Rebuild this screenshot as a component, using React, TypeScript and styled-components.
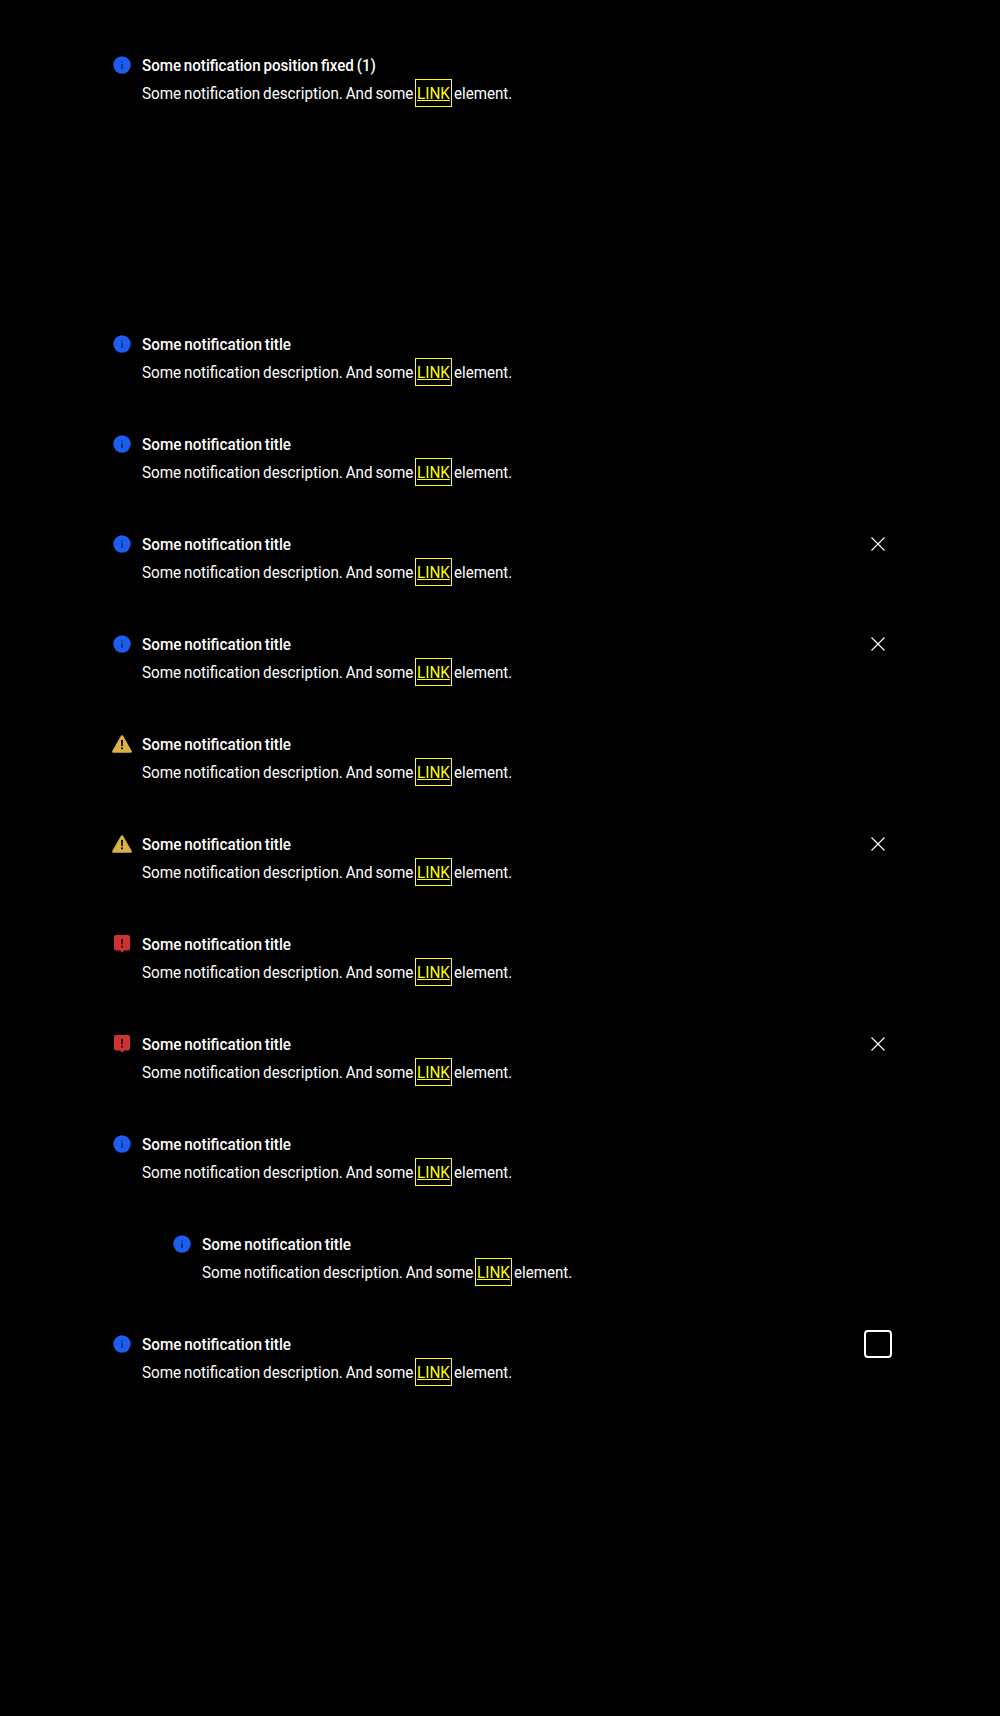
import React from "react";
import styled, { createGlobalStyle } from "styled-components";

type State = "info" | "warning" | "error";

const GlobalStyle = createGlobalStyle`
  html, body { margin: 0; background: #000; }
  * { box-sizing: border-box; }
`;

const Page = styled.main`
  height: 1716px;
  padding: 53px 108px 0 112px;
  background: #000;
  color: #fff;
  font: 400 16px/24px Roboto, "Liberation Sans", sans-serif;
`;

const Stack = styled.section`
  display: flex;
  flex-direction: column;
  gap: 48px;
  margin-top: 227px;
`;

const Row = styled.article<{ $indent?: boolean }>`
  display: flex;
  align-items: flex-start;
  height: 52px;
  margin-left: ${(p) => (p.$indent ? "60px" : "0")};
`;

const Icon = styled.svg`
  flex: none;
  width: 20px;
  height: 24px;
  margin-right: 10px;
`;

const Content = styled.div`
  flex: 1;
  display: flex;
  flex-direction: column;
  gap: 4px;
`;

const Line = styled.div`
  display: flex;
  height: 24px;
  white-space: nowrap;
`;

const Text = styled.span<{ $scale: number; $width?: number; $bold?: boolean }>`
  display: block;
  height: 26px;
  padding-top: 1px;
  width: ${(p) => (p.$width ? `${p.$width}px` : "auto")};
  font-weight: ${(p) => (p.$bold ? 500 : 400)};
  word-spacing: -1px;
  transform: scaleX(${(p) => p.$scale});
  transform-origin: left center;
`;

const Link = styled.a`
  display: block;
  width: 37px;
  height: 28px;
  margin: -2px 2px 0 0;
  padding: 1px 0 0 1px;
  border: 1px solid #ff0;
  color: #ff0;
  text-decoration: none;

  > span {
    text-decoration: underline;
    text-underline-offset: 1px;
    text-decoration-thickness: 1px;
    text-decoration-skip-ink: none;
  }
`;

const Close = styled.button<{ $focus?: boolean }>`
  display: grid;
  place-items: center;
  width: 28px;
  height: 28px;
  margin: -2px 0 0;
  padding: 0;
  border: 2px solid ${(p) => (p.$focus ? "#fff" : "transparent")};
  border-radius: 4px;
  background: transparent;
  color: ${(p) => (p.$focus ? "#020207" : "#fff")};
`;

function StateIcon({ state }: { state: State }) {
  return (
    <Icon viewBox="0 0 20 24">
      {state === "info" && (
        <>
          <circle cx="10" cy="12" r="8.7" fill="#1c5cf0" />
          <path d="M9.3 11h1.4v5H9.3zM9.3 8.4h1.4v1.4H9.3z" fill="#0a2560" />
        </>
      )}
      {state === "warning" && (
        <>
          <path d="M10 4.4 18.7 19.5H1.3z" fill="#dab144" stroke="#dab144" strokeWidth="2.4" strokeLinejoin="round" />
          <path d="M9 8h2l-.3 6.2H9.3zM9.1 15.5h1.8v1.8H9.1z" fill="#000" />
        </>
      )}
      {state === "error" && (
        <>
          <path
            d="M4 3h12a2 2 0 0 1 2 2v11.500a2 2 0 0 1-2 2h-4L10 20.800l-2-2.300H4a2 2 0 0 1-2-2V5a2 2 0 0 1 2-2z"
            fill="#cc3434"
          />
          <path d="M9 7h2l-.3 5.5H9.3zM9.1 13.7h1.8v1.8H9.1z" fill="#2a0808" />
        </>
      )}
    </Icon>
  );
}

interface NoticeProps {
  state?: State;
  title?: string;
  titleScale?: number;
  close?: boolean;
  focus?: boolean;
  indent?: boolean;
}

function Notice({
  state = "info",
  title = "Some notification title",
  titleScale = 0.957,
  close,
  focus,
  indent,
}: NoticeProps) {
  return (
    <Row $indent={indent}>
      <StateIcon state={state} />
      <Content>
        <Line>
          <Text $bold $scale={titleScale}>{title}</Text>
        </Line>
        <Line>
          <Text $scale={0.952} $width={273}>Some notification description. And some</Text>
          <Link href="#">
            <Text $scale={0.955}>LINK</Text>
          </Link>
          <Text $scale={0.943}>element.</Text>
        </Line>
      </Content>
      {close && (
        <Close $focus={focus} aria-label="Close">
          <svg width="14" height="14" viewBox="0 0 14 14" fill="none" stroke="currentColor" strokeWidth="1.1">
            <path d="M.5.5l13 13M13.5.5l-13 13" />
          </svg>
        </Close>
      )}
    </Row>
  );
}

export default function App() {
  return (
    <>
      <GlobalStyle />
      <Page>
        <Notice title="Some notification position fixed (1)" titleScale={0.946} />
        <Stack>
          <Notice />
          <Notice />
          <Notice close />
          <Notice close />
          <Notice state="warning" />
          <Notice state="warning" close />
          <Notice state="error" />
          <Notice state="error" close />
          <Notice />
          <Notice indent />
          <Notice close focus />
        </Stack>
      </Page>
    </>
  );
}
